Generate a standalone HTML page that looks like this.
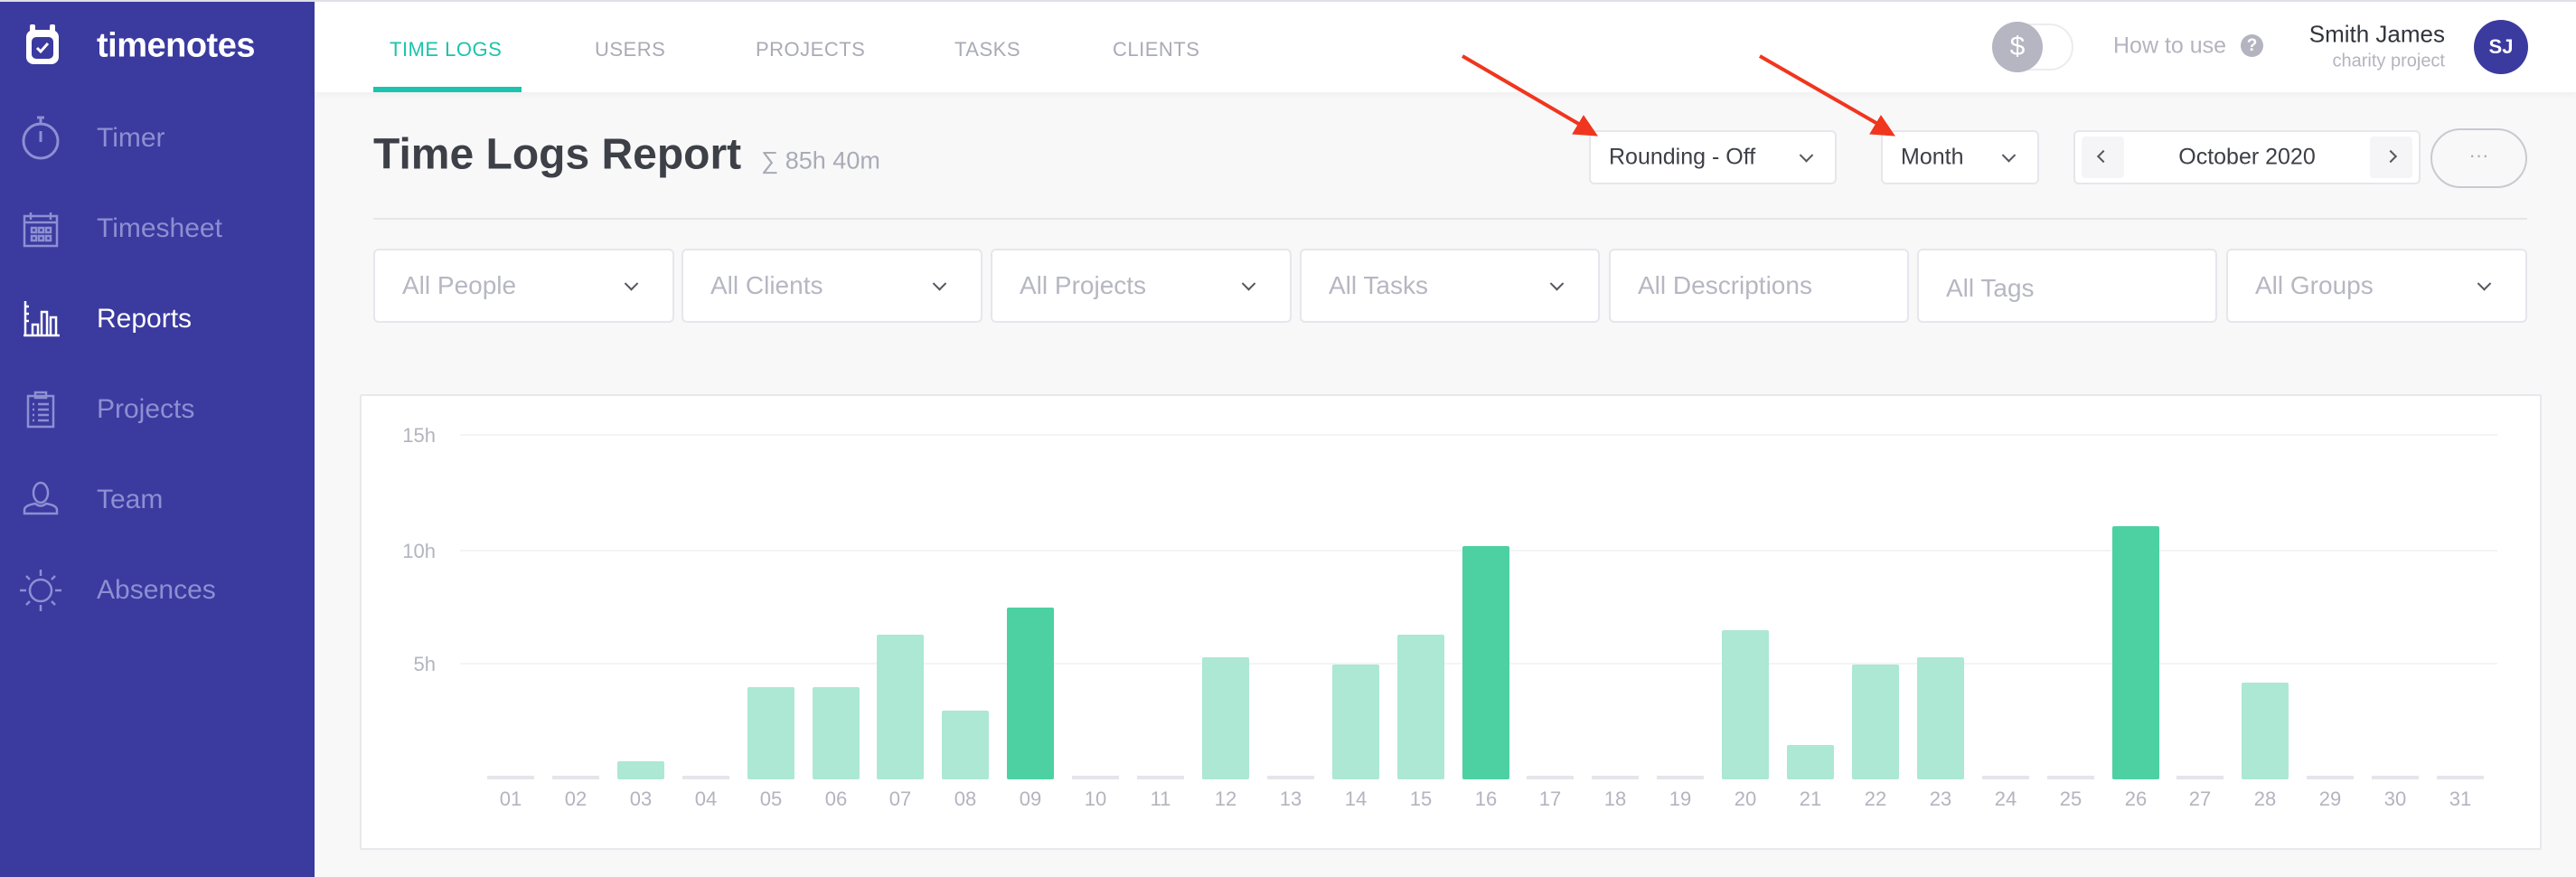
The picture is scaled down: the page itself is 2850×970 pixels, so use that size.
<!DOCTYPE html>
<html><head><meta charset="utf-8">
<style>
*{margin:0;padding:0;box-sizing:border-box}
body{width:2850px;height:970px;overflow:hidden;background:#f8f8f9;font-family:"Liberation Sans",sans-serif;position:relative}
.a{position:absolute}
#side{left:0;top:0;width:348px;height:970px;background:#3a3a9f}
.nav{position:absolute;left:107px;font-size:30px;color:#8d8fd2;transform:translateY(-50%)}
#hdr{left:348px;top:0;width:2502px;height:102px;background:#fff;box-shadow:0 3px 8px rgba(0,0,0,0.04)}
.tab{position:absolute;top:55px;transform:translateY(-50%);font-size:22px;color:#a9abb6;letter-spacing:0.5px}
.box{position:absolute;background:#fff;border:2px solid #e6e6ec;border-radius:6px}
.ft{position:absolute;left:30px;top:50%;transform:translateY(-50%);font-size:28px;color:#b6b7c2}
.chev{position:absolute;top:50%;width:11px;height:11px;border-right:2px solid #55575f;border-bottom:2px solid #55575f;transform:translateY(-70%) rotate(45deg)}
.dt{position:absolute;top:50%;transform:translateY(-50%);font-size:25px;color:#3d3f47}
</style></head><body>
<div class="a" style="left:0;top:0;width:2850px;height:2px;background:#e0e0e6;z-index:5"></div>
<div id="side" class="a">
 <svg class="a" style="left:25px;top:25px" width="44" height="50" viewBox="0 0 44 50">
  <rect x="4" y="8" width="36" height="38" rx="8" fill="#fff"/>
  <rect x="8" y="2" width="6" height="10" rx="2" fill="#fff"/><rect x="30" y="2" width="6" height="10" rx="2" fill="#fff"/>
  <rect x="10" y="16" width="24" height="24" rx="5" fill="#3a3a9f"/>
  <path d="M16 28l4 4 8-9" stroke="#fff" stroke-width="3" fill="none"/>
 </svg>
 <div class="a" style="left:107px;top:51px;transform:translateY(-50%);font-size:38px;font-weight:bold;color:#fff;letter-spacing:-0.5px">timenotes</div>
 <svg class="a" style="left:22px;top:127px" width="46" height="50" viewBox="0 0 46 50" fill="none" stroke="#8d8fd2" stroke-width="3"><circle cx="23" cy="29" r="19"/><path d="M19 3h8M23 3v7M23 18v12"/></svg>
 <div class="nav" style="top:153px">Timer</div>
 <svg class="a" style="left:24px;top:234px" width="44" height="40" viewBox="0 0 44 40" fill="none" stroke="#8d8fd2" stroke-width="2.5"><rect x="3" y="5" width="36" height="33"/><path d="M3 12h36M10 1v8M32 1v8M11 18h5v5h-5zM19 18h5v5h-5zM27 18h5v5h-5zM11 27h5v5h-5zM19 27h5v5h-5zM27 27h5v5h-5z"/></svg>
 <div class="nav" style="top:253px">Timesheet</div>
 <svg class="a" style="left:24px;top:331px" width="44" height="42" viewBox="0 0 44 42" fill="none" stroke="#fff" stroke-width="2.5"><path d="M2 40h40M4 2v38M4 8h4M4 16h4M4 24h4M12 40V28h6v12M22 40V14h6v26M32 40V20h6v20"/></svg>
 <div class="nav" style="top:353px;color:#fff">Reports</div>
 <svg class="a" style="left:28px;top:432px" width="34" height="42" viewBox="0 0 34 42" fill="none" stroke="#8d8fd2" stroke-width="2.5"><rect x="3" y="6" width="28" height="34"/><rect x="11" y="2" width="12" height="6"/><path d="M8 15h2M14 15h12M8 21h2M14 21h12M8 27h2M14 27h12M8 33h2M14 33h12"/></svg>
 <div class="nav" style="top:453px">Projects</div>
 <svg class="a" style="left:25px;top:532px" width="40" height="38" viewBox="0 0 40 38" fill="none" stroke="#8d8fd2" stroke-width="2.5"><ellipse cx="20" cy="13" rx="8" ry="11"/><path d="M2 36v-4c0-4 6-6 12-7q6 5 12 0c6 1 12 3 12 7v4z"/></svg>
 <div class="nav" style="top:553px">Team</div>
 <svg class="a" style="left:20px;top:628px" width="50" height="50" viewBox="0 0 50 50" fill="none" stroke="#8d8fd2" stroke-width="2.5"><circle cx="25" cy="25" r="12"/><path d="M25 2v7M25 41v7M2 25h7M41 25h7M9 9l4 4M37 37l4 4M41 9l-4 4M9 41l4-4"/></svg>
 <div class="nav" style="top:653px">Absences</div>
</div>
<div id="hdr" class="a">
 <div class="tab" style="left:83px;color:#1cc4ad">TIME LOGS</div>
 <div class="a" style="left:65px;top:96px;width:164px;height:6px;background:#1cc4ad"></div>
 <div class="tab" style="left:310px">USERS</div>
 <div class="tab" style="left:488px">PROJECTS</div>
 <div class="tab" style="left:708px">TASKS</div>
 <div class="tab" style="left:883px">CLIENTS</div>
 <div class="a" style="left:1856px;top:26px;width:90px;height:52px;border:2px solid #ececf0;border-radius:26px"></div>
 <div class="a" style="left:1856px;top:24px;width:56px;height:56px;border-radius:50%;background:#b6b6c2;color:#fff;font-size:30px;text-align:center;line-height:56px">$</div>
 <div class="a" style="left:1990px;top:51px;transform:translateY(-50%);font-size:25px;color:#b3b4bf">How to use</div>
 <div class="a" style="left:2131px;top:38px;width:25px;height:25px;border-radius:50%;background:#b3b4bf;color:#fff;font-size:19px;font-weight:bold;text-align:center;line-height:25px">?</div>
 <div class="a" style="right:145px;top:38px;transform:translateY(-50%);font-size:26px;color:#33353d">Smith James</div>
 <div class="a" style="right:145px;top:68px;transform:translateY(-50%);font-size:20px;color:#b3b4bf">charity project</div>
 <div class="a" style="left:2389px;top:22px;width:60px;height:60px;border-radius:50%;background:#3a3a9f;color:#fff;font-size:22px;font-weight:bold;text-align:center;line-height:60px">SJ</div>
</div>
<div class="a" style="left:413px;top:171px;transform:translateY(-50%);font-size:48px;font-weight:bold;color:#3d4047">Time Logs Report</div>
<div class="a" style="left:842px;top:178px;transform:translateY(-50%);font-size:27px;color:#a9abb6">∑ 85h 40m</div>
<div class="box" style="left:1758px;top:144px;width:274px;height:60px"><div class="dt" style="left:20px">Rounding - Off</div><div class="chev" style="right:26px"></div></div>
<div class="box" style="left:2081px;top:144px;width:175px;height:60px"><div class="dt" style="left:20px">Month</div><div class="chev" style="right:26px"></div></div>
<div class="box" style="left:2294px;top:144px;width:384px;height:60px">
 <div class="a" style="left:7px;top:5px;width:47px;height:46px;background:#f5f5f7;border-radius:4px"></div>
 <div class="a" style="right:7px;top:5px;width:47px;height:46px;background:#f5f5f7;border-radius:4px"></div>
 <div class="a" style="left:26px;top:22px;width:10px;height:10px;border-left:2px solid #55575f;border-bottom:2px solid #55575f;transform:rotate(45deg)"></div>
 <div class="a" style="right:26px;top:22px;width:10px;height:10px;border-right:2px solid #55575f;border-top:2px solid #55575f;transform:rotate(45deg)"></div>
 <div class="dt" style="left:0;width:380px;text-align:center">October 2020</div>
</div>
<div class="a" style="left:2689px;top:142px;width:107px;height:66px;border:2px solid #c9c9d1;border-radius:33px;text-align:center;line-height:56px;color:#a9abb6;font-size:22px">···</div>
<div class="a" style="left:413px;top:241px;width:2383px;height:2px;background:#e6e6ea"></div>
<div class="box" style="left:413px;top:275px;width:333px;height:82px"><div class="ft">All People</div><div class="chev" style="right:40px"></div></div>
<div class="box" style="left:754px;top:275px;width:333px;height:82px"><div class="ft">All Clients</div><div class="chev" style="right:40px"></div></div>
<div class="box" style="left:1096px;top:275px;width:333px;height:82px"><div class="ft">All Projects</div><div class="chev" style="right:40px"></div></div>
<div class="box" style="left:1438px;top:275px;width:332px;height:82px"><div class="ft">All Tasks</div><div class="chev" style="right:40px"></div></div>
<div class="box" style="left:1780px;top:275px;width:332px;height:82px"><div class="ft">All Descriptions</div></div>
<div class="box" style="left:2121px;top:275px;width:332px;height:82px"><div class="ft" style="top:54%">All Tags</div></div>
<div class="box" style="left:2463px;top:275px;width:333px;height:82px"><div class="ft">All Groups</div><div class="chev" style="right:40px"></div></div>
<div class="a" style="left:398px;top:436px;width:2414px;height:504px;background:#fff;border:2px solid #e8e8ed;border-radius:2px"></div>
<svg class="a" style="left:0;top:0" width="2850" height="970" font-family="Liberation Sans, sans-serif">
 <g stroke="#f4f4f6" stroke-width="2"><path d="M509 481H2763M509 609H2763M509 734H2763"/></g>
 <g font-size="22" fill="#b3b4bf" text-anchor="end"><text x="482" y="489">15h</text><text x="482" y="617">10h</text><text x="482" y="742">5h</text></g>
 <g fill="#e5e5ea">
  <rect x="539" y="858" width="52" height="4"/><rect x="611" y="858" width="52" height="4"/><rect x="755" y="858" width="52" height="4"/><rect x="1186" y="858" width="52" height="4"/><rect x="1258" y="858" width="52" height="4"/><rect x="1402" y="858" width="52" height="4"/><rect x="1689" y="858" width="52" height="4"/><rect x="1761" y="858" width="52" height="4"/><rect x="1833" y="858" width="52" height="4"/><rect x="2193" y="858" width="52" height="4"/><rect x="2265" y="858" width="52" height="4"/><rect x="2408" y="858" width="52" height="4"/><rect x="2552" y="858" width="52" height="4"/><rect x="2624" y="858" width="52" height="4"/><rect x="2696" y="858" width="52" height="4"/>
 </g>
 <g fill="#ace8d3">
  <rect x="683" y="842" width="52" height="20" rx="2"/>
  <rect x="827" y="760" width="52" height="102" rx="2"/>
  <rect x="899" y="760" width="52" height="102" rx="2"/>
  <rect x="970" y="702" width="52" height="160" rx="2"/>
  <rect x="1042" y="786" width="52" height="76" rx="2"/>
  <rect x="1330" y="727" width="52" height="135" rx="2"/>
  <rect x="1474" y="735" width="52" height="127" rx="2"/>
  <rect x="1546" y="702" width="52" height="160" rx="2"/>
  <rect x="1905" y="697" width="52" height="165" rx="2"/>
  <rect x="1977" y="824" width="52" height="38" rx="2"/>
  <rect x="2049" y="735" width="52" height="127" rx="2"/>
  <rect x="2121" y="727" width="52" height="135" rx="2"/>
  <rect x="2480" y="755" width="52" height="107" rx="2"/>
 </g>
 <g fill="#4dd0a2">
  <rect x="1114" y="672" width="52" height="190" rx="2"/>
  <rect x="1618" y="604" width="52" height="258" rx="2"/>
  <rect x="2337" y="582" width="52" height="280" rx="2"/>
 </g>
 <g font-size="22" fill="#b3b4bf" text-anchor="middle">
  <text x="565" y="891">01</text><text x="637" y="891">02</text><text x="709" y="891">03</text><text x="781" y="891">04</text><text x="853" y="891">05</text><text x="925" y="891">06</text><text x="996" y="891">07</text><text x="1068" y="891">08</text><text x="1140" y="891">09</text><text x="1212" y="891">10</text><text x="1284" y="891">11</text><text x="1356" y="891">12</text><text x="1428" y="891">13</text><text x="1500" y="891">14</text><text x="1572" y="891">15</text><text x="1644" y="891">16</text><text x="1715" y="891">17</text><text x="1787" y="891">18</text><text x="1859" y="891">19</text><text x="1931" y="891">20</text><text x="2003" y="891">21</text><text x="2075" y="891">22</text><text x="2147" y="891">23</text><text x="2219" y="891">24</text><text x="2291" y="891">25</text><text x="2363" y="891">26</text><text x="2434" y="891">27</text><text x="2506" y="891">28</text><text x="2578" y="891">29</text><text x="2650" y="891">30</text><text x="2722" y="891">31</text>
 </g>
 <g stroke="#f0361e" stroke-width="4" fill="#f0361e">
  <path d="M1618 62L1750 139" fill="none"/><path d="M1767 150L1740 148L1752 128z" stroke-width="1"/>
  <path d="M1947 62L2081 139" fill="none"/><path d="M2096 150L2069 148L2081 128z" stroke-width="1"/>
 </g>
</svg>
</body></html>
